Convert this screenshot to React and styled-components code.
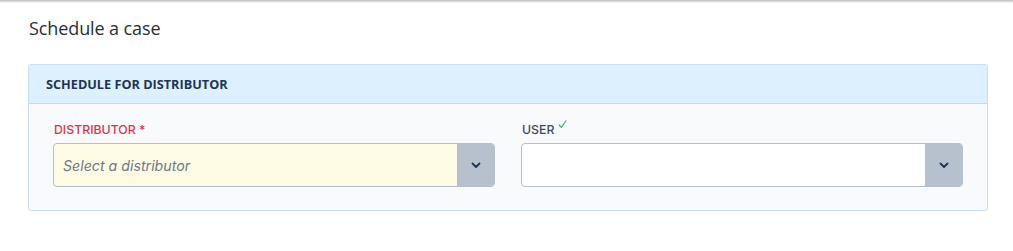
import React from "react";
import styled, { createGlobalStyle } from "styled-components";

const Global = createGlobalStyle`
  html, body { margin: 0; padding: 0; background: #fff; }
  body { font-family: "Open Sans", sans-serif; }
`;

const TopShadow = styled.div`
  height: 3px;
  background: linear-gradient(#b9bcc0, #e6e7e9 70%, #fff);
`;

const Page = styled.div`
  padding: 13px 25px 0 28px;
`;

const Title = styled.h1`
  margin: 0 0 0 1px;
  font-family: "Open Sans", sans-serif;
  font-weight: 400;
  font-size: 18px;
  line-height: 24px;
  color: #2a2f36;
  letter-spacing: -0.1px;
`;

const Card = styled.section`
  margin-top: 24px;
  width: 958px;
  border: 1px solid #c5dff0;
  border-radius: 3px;
  background: #f8fafc;
  overflow: hidden;
`;

const CardHeader = styled.div`
  height: 39px;
  box-sizing: border-box;
  padding: 0 17px;
  display: flex;
  align-items: center;
  background: #dcf1fd;
  border-bottom: 1px solid #bcdcf0;
  font-family: "Open Sans", sans-serif;
  font-weight: 700;
  font-size: 12.7px;
  color: #1e3456;
`;

const CardBody = styled.div`
  display: grid;
  grid-template-columns: 442px 442px;
  column-gap: 26px;
  padding: 18px 24px 23px 24px;
`;

const Field = styled.div`
  display: flex;
  flex-direction: column;
`;

const Label = styled.label`
  font-family: Inter, sans-serif;
  font-weight: 500;
  font-size: 12.3px;
  line-height: 15px;
  height: 15px;
  margin: 0 0 6px 1px;
  color: ${(p) => (p.$required ? "#dc3545" : "#3f4b5c")};
  display: flex;
  align-items: flex-start;
  gap: 4px;
`;

const Check = styled.svg`
  margin-top: -2px;
`;

const SelectBox = styled.div`
  height: 44px;
  box-sizing: border-box;
  display: flex;
  border: 1px solid #b3bfcc;
  border-radius: 4px;
  overflow: hidden;
  background: ${(p) => (p.$empty ? "#fefbe5" : "#ffffff")};
`;

const Value = styled.div`
  flex: 1;
  display: flex;
  align-items: center;
  padding-left: 9px;
  font-family: Inter, sans-serif;
  font-style: italic;
  font-size: 14.2px;
  color: #6b7a8c;
`;

const Arrow = styled.div`
  width: 37px;
  background: #b6c1cd;
  display: flex;
  align-items: center;
  justify-content: center;
`;

const Chevron = () => (
  <svg width="10" height="7" viewBox="0 0 10 7">
    <path d="M1.5 1.5 L5 5 L8.5 1.5" fill="none" stroke="#1d3357" strokeWidth="1.8" strokeLinecap="round" strokeLinejoin="round" />
  </svg>
);

export default function App() {
  return (
    <>
      <Global />
      <TopShadow />
      <Page>
        <Title>Schedule a case</Title>
        <Card>
          <CardHeader>SCHEDULE FOR DISTRIBUTOR</CardHeader>
          <CardBody>
            <Field>
              <Label $required>DISTRIBUTOR *</Label>
              <SelectBox $empty>
                <Value>Select a distributor</Value>
                <Arrow><Chevron /></Arrow>
              </SelectBox>
            </Field>
            <Field>
              <Label>
                USER
                <Check width="9" height="9" viewBox="0 0 9 9">
                  <path d="M1 5 L3.3 7.3 L8 1" fill="none" stroke="#3cba6a" strokeWidth="1.2" strokeLinecap="round" strokeLinejoin="round" />
                </Check>
              </Label>
              <SelectBox>
                <Value />
                <Arrow><Chevron /></Arrow>
              </SelectBox>
            </Field>
          </CardBody>
        </Card>
      </Page>
    </>
  );
}
